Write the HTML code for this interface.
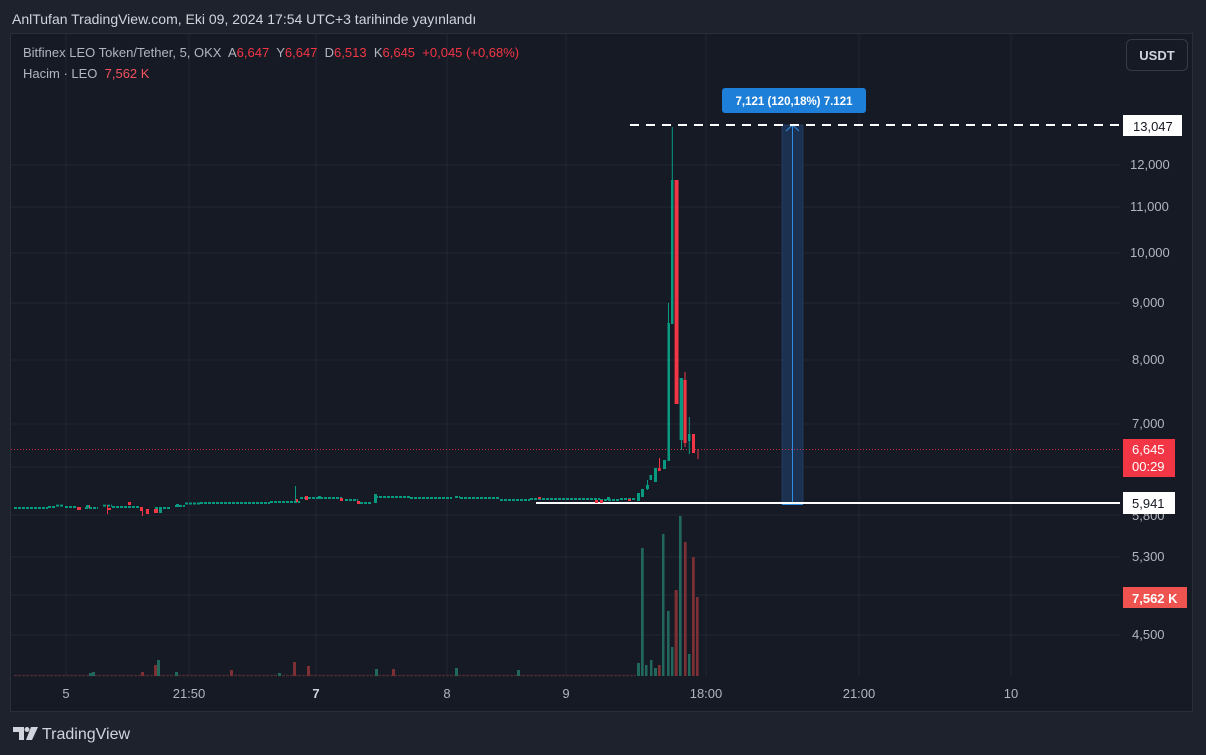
<!DOCTYPE html>
<html><head><meta charset="utf-8"><style>
body{margin:0;width:1206px;height:755px;background:#1e222d;font-family:"Liberation Sans",sans-serif;overflow:hidden;position:relative}
.t{position:absolute;white-space:nowrap}
</style></head><body>
<div class="t" style="left:12px;top:11px;font-size:14px;color:#d1d4dc">AnlTufan TradingView.com, Eki 09, 2024 17:54 UTC+3 tarihinde yayınlandı</div>
<svg style="position:absolute;left:0;top:0" width="1206" height="755">
<rect x="10.5" y="33.5" width="1182" height="678" fill="#161a25" stroke="#2a2e39"/>
<g stroke="#232733" stroke-width="1">
<path d="M66 34V676M189 34V676M316 34V676M447 34V676M566 34V676M706 34V676M859 34V676M1011 34V676"/>
<path d="M11 165H1120M11 207H1120M11 253H1120M11 303H1120M11 360H1120M11 424H1120M11 467H1120M11 515H1120M11 557H1120M11 595H1120M11 635H1120"/>
</g>
<!-- blue measure -->
<rect x="782" y="125" width="21" height="379" fill="#1c3150" stroke="#2a4f80" stroke-width="0.5"/>
<line x1="792.5" y1="126" x2="792.5" y2="504" stroke="#2e8de0"/>
<path d="M786 131L792.5 125L799 131" fill="none" stroke="#2e8de0"/>
<line x1="782" y1="504" x2="803" y2="504" stroke="#2e8de0" stroke-width="2"/>
<rect x="722" y="88" width="144" height="25" rx="3" fill="#1e7fd8"/>
<text x="794" y="105" fill="#fff" font-size="11.5" font-weight="bold" text-anchor="middle">7,121 (120,18%) 7.121</text>
<!-- lines -->
<line x1="630" y1="125" x2="1120" y2="125" stroke="#fff" stroke-width="2" stroke-dasharray="9 7"/>
<line x1="536" y1="503" x2="1120" y2="503" stroke="#fff" stroke-width="2"/>
<line x1="11" y1="449.5" x2="1120" y2="449.5" stroke="#f23645" stroke-dasharray="1 2" opacity=".8"/>
<!-- flat candles -->
<g stroke="#089981" stroke-width="2" stroke-dasharray="3 1" fill="none">
<path d="M14 508H48M48 507H56M56 505.6H64M65 507H77M85 508H98M103 505.6H112M112 507H140M155 508H170M175 506H185M185 503.5H200M200 503H270M270 502H300M300 498H342M345 500H358M360 503H372M375 497H410M410 498H452M455 497H460M460 498H500M500 500H530M530 499H600M600 500H620M620 499H636"/>
</g>
<g fill="#f23645">
<rect x="77" y="507" width="4" height="3"/><rect x="86" y="505" width="4" height="3"/><rect x="108" y="508" width="3" height="2"/>
<rect x="128" y="502" width="3" height="3"/><rect x="140" y="507" width="3" height="4"/><rect x="146" y="509" width="3" height="5"/>
<rect x="154" y="509" width="4" height="4"/><rect x="107" y="505" width="1" height="9"/><rect x="142" y="507" width="1" height="9"/>
<rect x="305" y="496" width="3" height="4"/><rect x="340" y="498" width="3" height="3"/><rect x="357" y="501" width="3" height="3"/>
<rect x="295" y="499" width="3" height="3"/><rect x="538" y="497" width="3" height="2"/><rect x="595" y="500" width="3" height="3"/>
<rect x="600" y="500" width="3" height="3"/><rect x="628" y="499" width="3" height="2"/>
</g>
<g fill="#089981">
<rect x="86" y="505" width="3" height="3"/><rect x="159" y="508" width="3" height="5"/><rect x="176" y="504" width="3" height="3"/>
<rect x="295" y="486" width="1" height="17"/><rect x="318" y="496" width="3" height="3"/><rect x="374" y="494" width="3" height="9"/><rect x="375" y="494" width="1" height="9"/>
<rect x="607" y="497" width="3" height="3"/>
<rect x="637" y="493" width="3" height="8"/><rect x="641" y="489" width="3" height="8"/><rect x="646" y="485" width="3" height="4"/><rect x="647" y="480" width="1" height="10"/>
<rect x="649.5" y="475" width="2.5" height="5"/><rect x="654" y="468" width="3" height="14"/><rect x="663" y="460" width="3" height="9"/>
<rect x="667.5" y="323" width="2.5" height="138"/><rect x="668" y="303" width="1" height="20"/>
<rect x="671" y="180" width="2.5" height="144"/><rect x="671.8" y="127" width="1" height="53"/>
<rect x="679.6" y="378" width="3.5" height="62"/><rect x="681" y="378" width="1" height="72"/>
<rect x="688" y="434" width="2.5" height="7"/><rect x="688.8" y="417" width="1" height="37"/>
</g>
<g fill="#f23645">
<rect x="658" y="468" width="2.7" height="3"/><rect x="659" y="458" width="1" height="13"/>
<rect x="674.6" y="180" width="3.9" height="224"/>
<rect x="683.5" y="380" width="3.1" height="63"/><rect x="684.5" y="372" width="1" height="75"/>
<rect x="692" y="434" width="3" height="19"/><rect x="697.5" y="449" width="1" height="10"/>
</g>
<!-- volume -->
<path d="M14 675.5H636" stroke="#4a2b33" stroke-width="1.5" stroke-dasharray="3 1"/>
<g fill="#22675c">
<rect x="157" y="660" width="3" height="16"/><rect x="92" y="672" width="3" height="4"/><rect x="375" y="669" width="3" height="7"/><rect x="455" y="668" width="3" height="8"/><rect x="517" y="670" width="3" height="6"/><rect x="89" y="673" width="3" height="3"/><rect x="175" y="672" width="3" height="4"/><rect x="278" y="673" width="3" height="3"/>
<rect x="637" y="663" width="3" height="13"/><rect x="641" y="548" width="2.7" height="128"/><rect x="645" y="665" width="2.5" height="11"/>
<rect x="650" y="660" width="2.5" height="16"/><rect x="654" y="668" width="3" height="8"/><rect x="662" y="534" width="2.5" height="142"/>
<rect x="667" y="611" width="2.6" height="65"/><rect x="671" y="647" width="2.5" height="29"/><rect x="679" y="516" width="2.6" height="160"/>
<rect x="688" y="654" width="2.5" height="22"/>
</g>
<g fill="#7d3034">
<rect x="154" y="665" width="3" height="11"/><rect x="293" y="662" width="3" height="14"/><rect x="307" y="666" width="3" height="10"/><rect x="392" y="669" width="3" height="7"/><rect x="230" y="670" width="3" height="6"/><rect x="141" y="672" width="3" height="4"/>
<rect x="658" y="665" width="2.7" height="11"/><rect x="674.6" y="590" width="3.1" height="86"/><rect x="684" y="542" width="2.6" height="134"/>
<rect x="692" y="557" width="2.7" height="119"/><rect x="696" y="597" width="2.6" height="79"/>
</g>
<!-- axis labels -->
<g fill="#b2b5be" font-size="13">
<text x="1130" y="169">12,000</text><text x="1130" y="211">11,000</text><text x="1130" y="257">10,000</text>
<text x="1132" y="307">9,000</text><text x="1132" y="364">8,000</text><text x="1132" y="428">7,000</text>
<text x="1132" y="520">5,800</text><text x="1132" y="561">5,300</text><text x="1132" y="639">4,500</text>
<text x="66" y="698" text-anchor="middle">5</text><text x="189" y="698" text-anchor="middle">21:50</text>
<text x="316" y="698" text-anchor="middle" font-weight="bold" fill="#d1d4dc">7</text><text x="447" y="698" text-anchor="middle">8</text>
<text x="566" y="698" text-anchor="middle">9</text><text x="706" y="698" text-anchor="middle">18:00</text>
<text x="859" y="698" text-anchor="middle">21:00</text><text x="1011" y="698" text-anchor="middle">10</text>
</g>
<rect x="1123" y="115" width="59" height="21" fill="#fff"/><text x="1133" y="131" font-size="13" fill="#131722">13,047</text>
<rect x="1123" y="439" width="52" height="38" fill="#f23645"/><text x="1132" y="454" font-size="13" fill="#fff">6,645</text><text x="1132" y="471" font-size="13" fill="#fff">00:29</text>
<rect x="1123" y="492" width="52" height="22" fill="#fff"/><text x="1132" y="508" font-size="13" fill="#131722">5,941</text>
<rect x="1123" y="587" width="64" height="21" fill="#ef5350"/><text x="1132" y="603" font-size="13" fill="#fff" font-weight="bold">7,562 K</text>
<rect x="1126.5" y="39.5" width="61" height="31" rx="5" fill="#161a25" stroke="#363a45"/>
<text x="1157" y="60" font-size="13" fill="#d1d4dc" text-anchor="middle" font-weight="bold">USDT</text>
<!-- logo -->
<path d="M13 727h11v13h-5v-8h-6z" fill="#d1d4dc"/><circle cx="27" cy="729.5" r="2.5" fill="#d1d4dc"/><path d="M31 727h7l-6 13h-6z" fill="#d1d4dc"/>
<text x="42" y="739" font-size="16" fill="#d1d4dc">TradingView</text>
</svg>
<div class="t" style="left:23px;top:45px;font-size:13px;color:#b2b5be">Bitfinex LEO Token/Tether, 5, OKX&nbsp; A<span style="color:#f23645">6,647</span>&nbsp; Y<span style="color:#f23645">6,647</span>&nbsp; D<span style="color:#f23645">6,513</span>&nbsp; K<span style="color:#f23645">6,645</span>&nbsp; <span style="color:#f23645">+0,045 (+0,68%)</span></div>
<div class="t" style="left:23px;top:66px;font-size:13px;color:#b2b5be">Hacim · LEO&nbsp; <span style="color:#f7525f">7,562 K</span></div>
</body></html>
